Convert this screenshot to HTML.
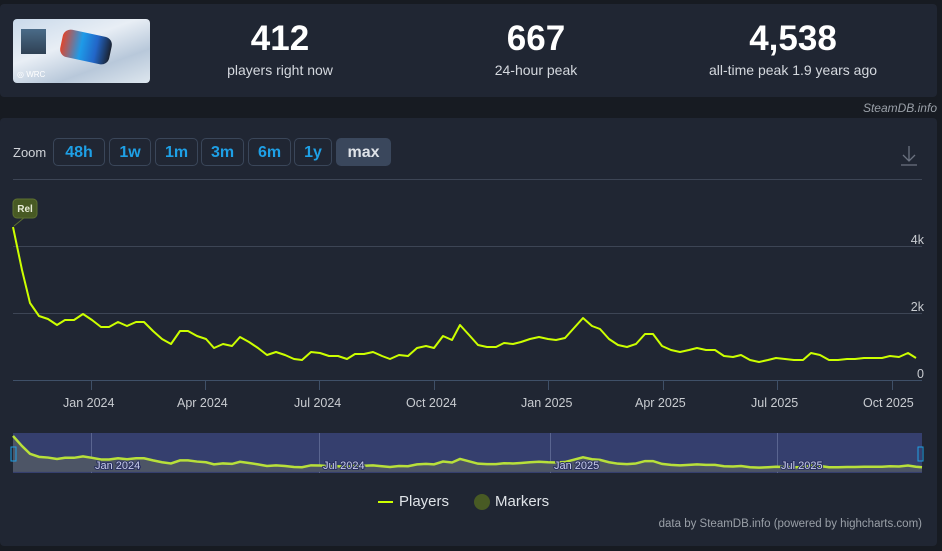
<!DOCTYPE html>
<html><head><meta charset="utf-8"><style>
body{margin:0;background:#171b22;width:942px;height:551px;overflow:hidden;font-family:"Liberation Sans",sans-serif;position:relative}
.card{position:absolute;background:#202633;border-radius:4px}
.stat{position:absolute;top:20px;text-align:center;color:#fff}
.stat b{display:block;font-size:35px;line-height:38px;font-weight:bold}
.stat span{display:block;font-size:14px;color:#d4d8de;margin-top:4px}
.btn{position:absolute;top:138px;height:28px;border:1px solid #3a4659;border-radius:5px;color:#1ea0e6;font-weight:bold;font-size:16px;line-height:28px;text-align:center;box-sizing:border-box}
.ax{position:absolute;font-size:12.5px;color:#c9ccd1}
</style></head><body>
<div class="card" style="left:0;top:4px;width:937px;height:93px"></div>
<div style="position:absolute;left:13px;top:19px;width:137px;height:64px;border-radius:4px;background:linear-gradient(160deg,#c9d9ea 0%,#e8eef5 40%,#b8c8da 70%,#dde6ee 100%);overflow:hidden">
<div style="position:absolute;left:8px;top:10px;width:25px;height:25px;background:linear-gradient(#4a6b88,#2f4154)"></div>
<div style="position:absolute;left:48px;top:14px;width:50px;height:28px;border-radius:8px;background:linear-gradient(90deg,#e0452c,#1e9be8 40%,#2266c8 70%,#1a2230);transform:rotate(12deg)"></div>
<div style="position:absolute;left:4px;top:51px;font-size:8px;color:#fff">◎ WRC</div></div>
<div class="stat" style="left:200px;width:160px"><b>412</b><span>players right now</span></div>
<div class="stat" style="left:456px;width:160px"><b>667</b><span>24-hour peak</span></div>
<div class="stat" style="left:693px;width:200px"><b>4,538</b><span>all-time peak 1.9 years ago</span></div>
<div style="position:absolute;right:5px;top:101px;font-size:12px;font-style:italic;color:#9aa0a8">SteamDB.info</div>
<div class="card" style="left:0;top:118px;width:937px;height:428px"></div>
<div style="position:absolute;left:13px;top:145px;font-size:13px;color:#d0d3d8">Zoom</div>
<div class="btn" style="left:53px;width:52px">48h</div>
<div class="btn" style="left:109px;width:42px">1w</div>
<div class="btn" style="left:155px;width:43px">1m</div>
<div class="btn" style="left:201px;width:43px">3m</div>
<div class="btn" style="left:248px;width:43px">6m</div>
<div class="btn" style="left:294px;width:38px">1y</div>
<div class="btn" style="left:336px;width:55px;background:#3a475c;border-color:#3a475c;color:#dfe3e8">max</div>
<svg width="942" height="551" style="position:absolute;left:0;top:0">
<path d="M909 146v15M903 155l6 6 6-6M901 165h16" stroke="#6b7280" stroke-width="1.3" fill="none"/>
<line x1="13" y1="179.5" x2="922" y2="179.5" stroke="#3d4555"/>
<line x1="13" y1="246.5" x2="922" y2="246.5" stroke="#3d4555"/>
<line x1="13" y1="313.5" x2="922" y2="313.5" stroke="#3d4555"/>
<line x1="13" y1="380.5" x2="922" y2="380.5" stroke="#3f5068"/>
<g stroke="#3f5068"><line x1="91.5" y1="380" x2="91.5" y2="390"/><line x1="205.5" y1="380" x2="205.5" y2="390"/><line x1="319.5" y1="380" x2="319.5" y2="390"/><line x1="434.5" y1="380" x2="434.5" y2="390"/><line x1="548.5" y1="380" x2="548.5" y2="390"/><line x1="663.5" y1="380" x2="663.5" y2="390"/><line x1="777.5" y1="380" x2="777.5" y2="390"/><line x1="892.5" y1="380" x2="892.5" y2="390"/></g>
<polyline fill="none" stroke="#ccff00" stroke-width="2" stroke-linejoin="round" points="13,227 22,270 30,303 39,316 48,319 57,325 65,320 74,320 83,314 92,320 101,327 109,327 118,322 127,326 136,322 144,322 153,331 162,339 171,344 180,331 188,331 197,336 206,339 214,348 223,344 232,346 240,337 249,342 258,348 267,355 276,352 285,355 294,359 302,360 311,352 320,353 329,356 338,356 347,359 355,354 364,354 373,352 382,356 390,359 399,355 408,356 417,348 426,346 434,348 443,336 452,340 460,325 470,336 478,345 487,347 496,347 504,343 513,344 521,342 530,339 539,337 548,339 556,340 565,338 583,318 592,326 600,329 609,339 618,345 627,347 636,344 645,334 653,334 662,346 671,350 680,352 689,350 697,348 706,350 715,350 724,356 733,357 741,355 750,360 759,362 768,360 776,358 785,359 794,360 803,360 811,353 820,355 829,360 838,360 847,359 855,359 864,358 873,358 882,358 890,356 899,357 908,353 916,358"/>
<line x1="14" y1="226" x2="25" y2="217" stroke="#5d7030"/>
<rect x="13" y="199" width="24" height="19" rx="4" fill="#485a24" stroke="#5d7030"/>
<text x="25" y="212" font-size="10" font-weight="bold" fill="#e8ecd8" text-anchor="middle" font-family="Liberation Sans">Rel</text>
<rect x="13" y="433" width="909" height="40" fill="#353f6e"/>
<g stroke="#5a6590"><line x1="91.5" y1="433" x2="91.5" y2="473"/><line x1="319.5" y1="433" x2="319.5" y2="473"/><line x1="550.5" y1="433" x2="550.5" y2="473"/><line x1="777.5" y1="433" x2="777.5" y2="473"/></g>
<g transform="translate(0,382.6) scale(1,0.235)"><polygon fill="#4d5566" points="13,380 13,227 22,270 30,303 39,316 48,319 57,325 65,320 74,320 83,314 92,320 101,327 109,327 118,322 127,326 136,322 144,322 153,331 162,339 171,344 180,331 188,331 197,336 206,339 214,348 223,344 232,346 240,337 249,342 258,348 267,355 276,352 285,355 294,359 302,360 311,352 320,353 329,356 338,356 347,359 355,354 364,354 373,352 382,356 390,359 399,355 408,356 417,348 426,346 434,348 443,336 452,340 460,325 470,336 478,345 487,347 496,347 504,343 513,344 521,342 530,339 539,337 548,339 556,340 565,338 583,318 592,326 600,329 609,339 618,345 627,347 636,344 645,334 653,334 662,346 671,350 680,352 689,350 697,348 706,350 715,350 724,356 733,357 741,355 750,360 759,362 768,360 776,358 785,359 794,360 803,360 811,353 820,355 829,360 838,360 847,359 855,359 864,358 873,358 882,358 890,356 899,357 908,353 916,358 922,360 922,380"/><polyline fill="none" stroke="#b8e03a" stroke-width="2.5" vector-effect="non-scaling-stroke" points="13,227 22,270 30,303 39,316 48,319 57,325 65,320 74,320 83,314 92,320 101,327 109,327 118,322 127,326 136,322 144,322 153,331 162,339 171,344 180,331 188,331 197,336 206,339 214,348 223,344 232,346 240,337 249,342 258,348 267,355 276,352 285,355 294,359 302,360 311,352 320,353 329,356 338,356 347,359 355,354 364,354 373,352 382,356 390,359 399,355 408,356 417,348 426,346 434,348 443,336 452,340 460,325 470,336 478,345 487,347 496,347 504,343 513,344 521,342 530,339 539,337 548,339 556,340 565,338 583,318 592,326 600,329 609,339 618,345 627,347 636,344 645,334 653,334 662,346 671,350 680,352 689,350 697,348 706,350 715,350 724,356 733,357 741,355 750,360 759,362 768,360 776,358 785,359 794,360 803,360 811,353 820,355 829,360 838,360 847,359 855,359 864,358 873,358 882,358 890,356 899,357 908,353 916,358 922,360"/></g>
<g font-family="Liberation Sans" font-size="11" fill="#c8cce8" stroke="#2a3060" stroke-width="2" paint-order="stroke"><text x="95" y="469">Jan 2024</text><text x="323" y="469">Jul 2024</text><text x="554" y="469">Jan 2025</text><text x="781" y="469">Jul 2025</text></g>
<rect x="11" y="447" width="5" height="14" fill="none" stroke="#1ea0e6"/><rect x="918" y="447" width="5" height="14" fill="none" stroke="#1ea0e6"/>
<line x1="378" y1="502" x2="393" y2="502" stroke="#ccff00" stroke-width="2"/>
<circle cx="482" cy="502" r="8" fill="#485a24"/>
</svg>
<div class="ax" style="right:18px;top:233px">4k</div>
<div class="ax" style="right:18px;top:300px">2k</div>
<div class="ax" style="right:18px;top:367px">0</div>
<div class="ax" style="left:63px;top:396px">Jan 2024</div>
<div class="ax" style="left:177px;top:396px">Apr 2024</div>
<div class="ax" style="left:294px;top:396px">Jul 2024</div>
<div class="ax" style="left:406px;top:396px">Oct 2024</div>
<div class="ax" style="left:521px;top:396px">Jan 2025</div>
<div class="ax" style="left:635px;top:396px">Apr 2025</div>
<div class="ax" style="left:751px;top:396px">Jul 2025</div>
<div class="ax" style="left:863px;top:396px">Oct 2025</div>
<div style="position:absolute;left:399px;top:493px;font-size:15px;color:#dfe3e8">Players</div>
<div style="position:absolute;left:495px;top:493px;font-size:15px;color:#dfe3e8">Markers</div>
<div style="position:absolute;right:20px;top:518px;font-size:11.5px;color:#9aa0a8">data by SteamDB.info (powered by highcharts.com)</div>
</body></html>
